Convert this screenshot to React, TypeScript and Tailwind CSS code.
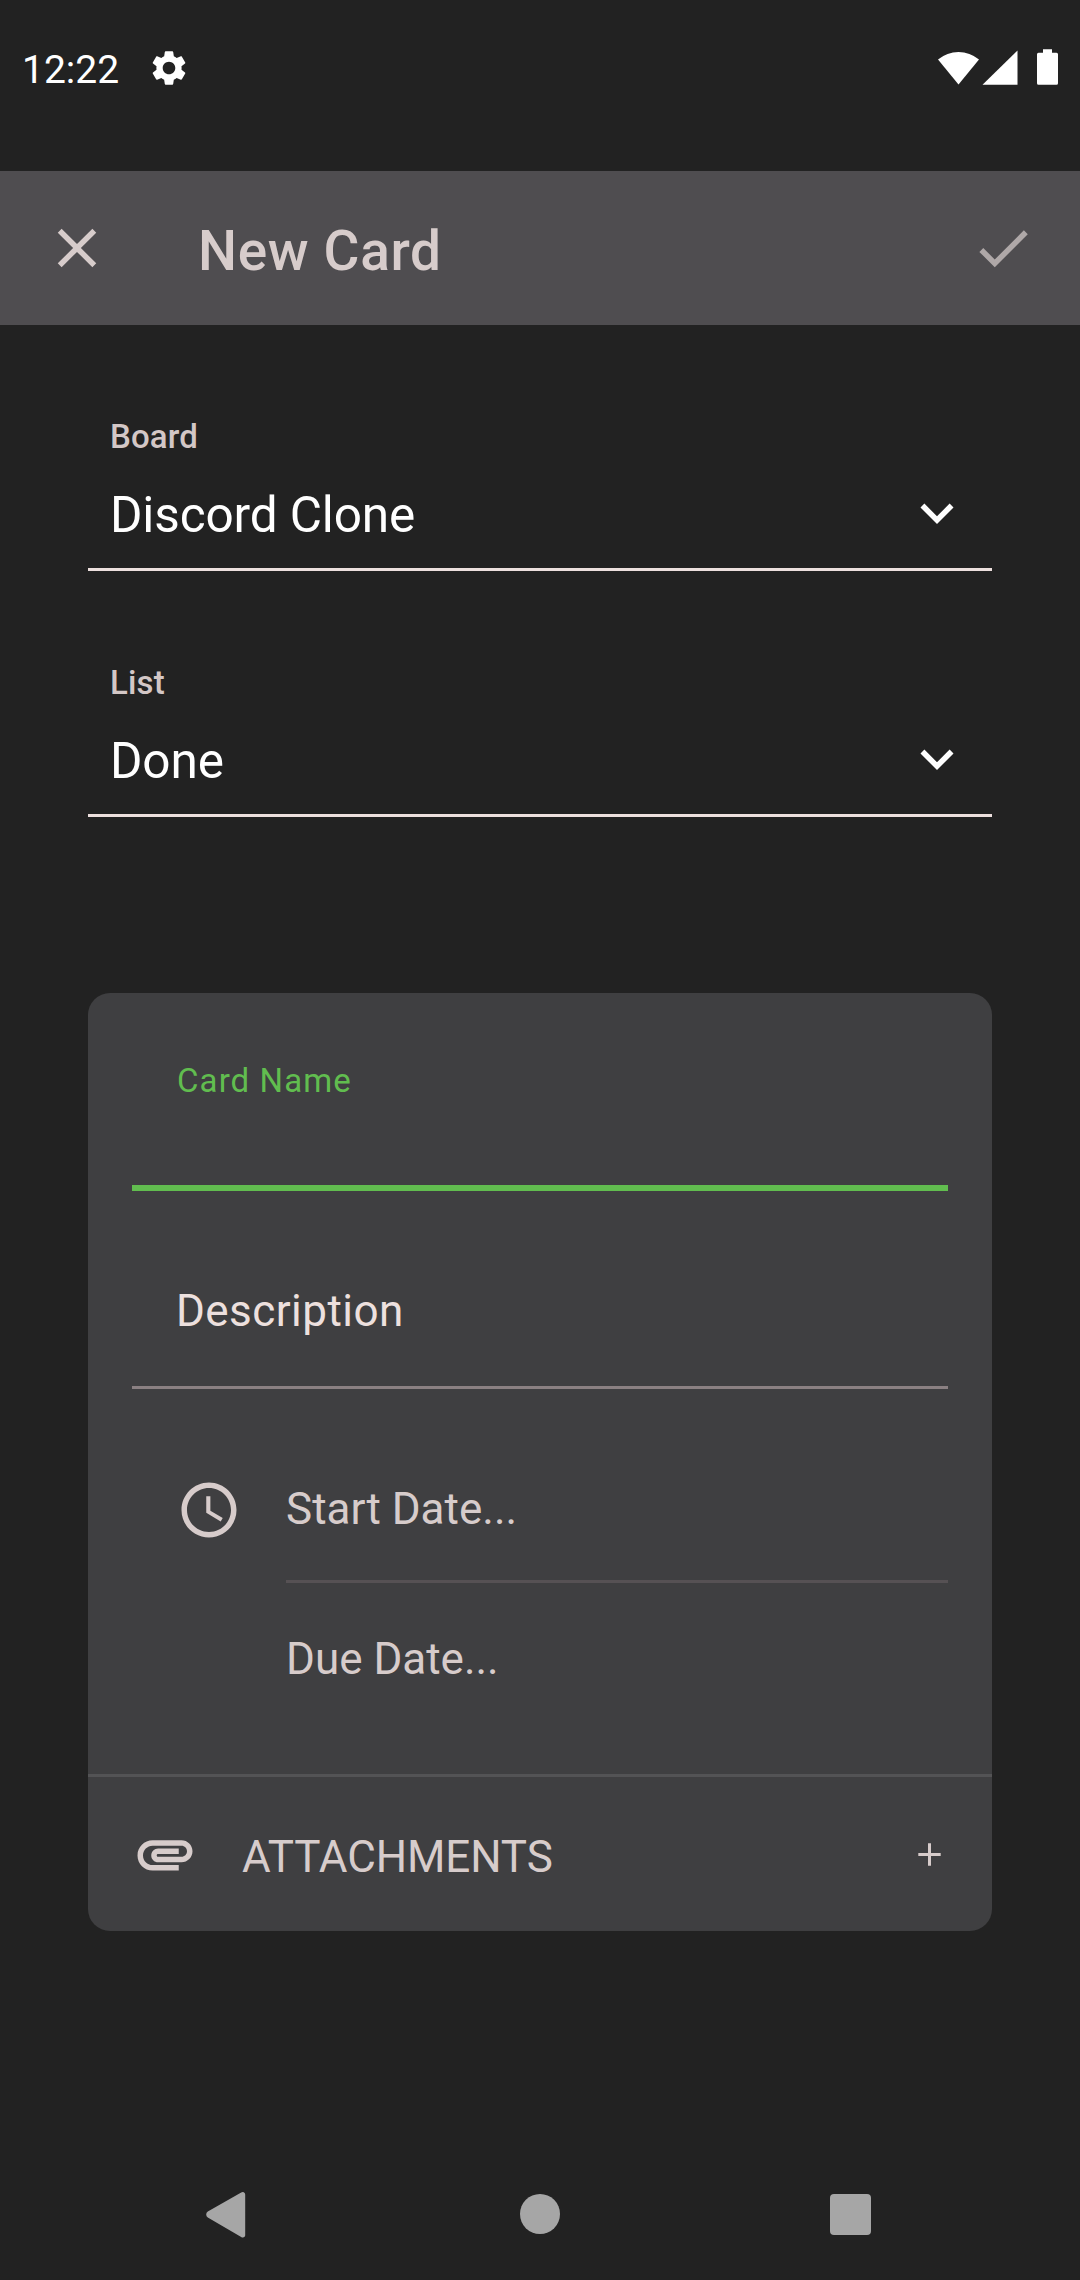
import type { ReactNode } from "react";

function Icon({ d, className }: { d: string; className: string }) {
  return (
    <svg viewBox="0 0 24 24" fill="currentColor" className={"block shrink-0 " + className}>
      <path d={d} />
    </svg>
  );
}

const CLOSE = "M19 6.41 17.59 5 12 10.59 6.41 5 5 6.41 10.59 12 5 17.59 6.41 19 12 13.41 17.59 19 19 17.59 13.41 12z";
const CHECK = "M9 16.17 4.83 12l-1.42 1.41L9 19 21 7l-1.41-1.41z";
const CHEVRON = "M7.41 8.59 12 13.17l4.59-4.58L18 10l-6 6-6-6z";
const CLOCK =
  "M11.99 2C6.47 2 2 6.48 2 12s4.47 10 9.99 10C17.52 22 22 17.52 22 12S17.52 2 11.99 2zM12 20c-4.42 0-8-3.58-8-8s3.58-8 8-8 8 3.58 8 8-3.58 8-8 8zM12.5 7H11v6l5.25 3.15.75-1.23-4.5-2.67z";
const CLIP =
  "M2 12.5C2 9.46 4.46 7 7.5 7H18c2.21 0 4 1.79 4 4s-1.79 4-4 4H9.5C8.12 15 7 13.88 7 12.5S8.12 10 9.5 10H17v2H9.41c-.55 0-.55 1 0 1H18c1.1 0 2-.9 2-2s-.9-2-2-2H7.5C5.57 9 4 10.57 4 12.5S5.57 16 7.5 16H17v2H7.5C4.46 18 2 15.54 2 12.5z";
const GEAR =
  "M19.14 12.94c.04-.3.06-.61.06-.94 0-.32-.02-.64-.07-.94l2.03-1.58c.18-.14.23-.41.12-.61l-1.92-3.32c-.12-.22-.37-.29-.59-.22l-2.39.96c-.5-.38-1.03-.7-1.62-.94l-.36-2.54c-.04-.24-.24-.41-.48-.41h-3.84c-.24 0-.43.17-.47.41l-.36 2.54c-.59.24-1.13.57-1.62.94l-2.39-.96c-.22-.08-.47 0-.59.22L2.74 8.87c-.12.21-.08.47.12.61l2.03 1.58c-.05.3-.09.63-.09.94s.02.64.07.94l-2.03 1.58c-.18.14-.23.41-.12.61l1.92 3.32c.12.22.37.29.59.22l2.39-.96c.5.38 1.03.7 1.62.94l.36 2.54c.05.24.24.41.48.41h3.84c.24 0 .44-.17.47-.41l.36-2.54c.59-.24 1.13-.56 1.62-.94l2.39.96c.22.08.47 0 .59-.22l1.92-3.32c.12-.22.07-.47-.12-.61l-2.01-1.58zM12 15.6c-1.98 0-3.6-1.62-3.6-3.6s1.62-3.6 3.6-3.6 3.6 1.62 3.6 3.6-1.62 3.6-3.6 3.6z";

function StatusBar() {
  return (
    <div className="flex h-[171px] items-start justify-between text-white">
      <div className="flex h-[138px] items-center pl-[22px]">
        <span className="w-[126px] pt-[3px] text-[39px]">12:22</span>
        <Icon d={GEAR} className="mb-[3px] size-[42px]" />
      </div>
      <svg viewBox="0 0 142 40" fill="currentColor" className="mt-[47px] block h-[40px] w-[142px]">
        <path d="M20.500 37.500L0 12.500a32 32 0 0 1 41 0z" />
        <path d="M79.500 3.500v34.200h-35z" />
        <path d="M105 2.300h9v3.500h4.500a1.500 1.500 0 0 1 1.500 1.500v29a1.500 1.500 0 0 1-1.500 1.500h-18a1.500 1.500 0 0 1-1.500-1.500v-29a1.500 1.500 0 0 1 1.500-1.500h4.500z" />
      </svg>
    </div>
  );
}

function Header() {
  return (
    <header className="flex h-[154px] items-center bg-[#4f4d50] px-[44px] text-[#d7cccb]">
      <Icon d={CLOSE} className="size-[66px]" />
      <h1 className="ml-[88px] flex-1 pt-[7px] text-[55px] font-medium tracking-[0.65px]">New Card</h1>
      <Icon d={CHECK} className="size-[66px] text-[#afa8a8]" />
    </header>
  );
}

function SelectField({ label, value }: { label: string; value: string }) {
  return (
    <div className="h-[178px] border-b-[3px] border-[#ede0de] px-[22px]">
      <div className="h-[87px] pt-[22px] text-[33px] leading-[44px] font-medium tracking-[0.15px] text-[#d3c7c6]">
        {label}
      </div>
      <div className="flex h-[66px] items-center justify-between text-white">
        <span className="pt-[6px] text-[49.5px] tracking-[-0.13px]">{value}</span>
        <Icon d={CHEVRON} className="size-[66px]" />
      </div>
    </div>
  );
}

function DateRow({ icon, line, children }: { icon?: ReactNode; line: string; children: ReactNode }) {
  return (
    <div className="flex h-[150px] pr-[44px] pl-[88px]">
      <div className="flex w-[110px] items-center pt-[3px]">{icon}</div>
      <div className={"flex flex-1 items-center text-[44px] text-[#d7cccb] " + line}>{children}</div>
    </div>
  );
}

function CardForm() {
  return (
    <section className="h-[938px] overflow-hidden rounded-[22px] bg-[#3f3f41]">
      <div className="mx-[44px] h-[198px] border-b-[6px] border-[#61bd4f] pt-[66px] pl-[45px]">
        <div className="text-[33px] leading-[44px] tracking-[1.1px] text-[#61bd4f]">Card Name</div>
      </div>
      <div className="mx-[44px] flex h-[198px] items-center border-b-[3px] border-[#8a8082] pt-[44px] pl-[44px]">
        <span className="text-[44px] tracking-[0.45px] text-[#ede0de]">Description</span>
      </div>
      <div className="h-[381px] pt-[44px]">
        <DateRow
          icon={<Icon d={CLOCK} className="size-[66px] text-[#d7cccb]" />}
          line="pt-[4px] border-b-[3px] border-[#565154]"
        >
          Start Date...
        </DateRow>
        <DateRow line="pt-[2px]">Due Date...</DateRow>
      </div>
      <div className="mt-[4px] flex h-[157px] items-center border-t-[3px] border-[#535355] pr-[43px] pl-[44px] text-[#d7cccb]">
        <Icon d={CLIP} className="size-[66px]" />
        <span className="ml-[44px] flex-1 pt-[6px] text-[44px] tracking-[-0.1px]">ATTACHMENTS</span>
        <svg viewBox="0 0 39 39" stroke="currentColor" strokeWidth="3" className="block size-[39px]">
          <path d="M8.300 19.500h22.400M19.500 8.300v22.400" />
        </svg>
      </div>
    </section>
  );
}

function NavBar() {
  return (
    <nav className="mt-auto flex h-[132px] items-center justify-between pr-[209px] pl-[204px] text-[#a6a6a6]">
      <svg viewBox="0 0 44 48" fill="currentColor" className="block h-[48px] w-[44px]">
        <path d="M3.800 21.500 37.200 2.500a2.500 2.500 0 0 1 4 2v41a2.500 2.500 0 0 1-4 1.500L3.800 27.500a3.600 3.600 0 0 1 0-6z" />
      </svg>
      <div className="ml-[2px] size-[40px] rounded-full bg-[#a6a6a6]" />
      <div className="size-[41px] rounded-[4px] bg-[#a6a6a6]" />
    </nav>
  );
}

export default function App() {
  return (
    <div className="flex h-[2280px] w-[1080px] flex-col bg-[#222222] font-['Roboto',sans-serif] leading-none">
      <StatusBar />
      <Header />
      <main className="px-[88px] pt-[68px]">
        <SelectField label="Board" value="Discord Clone" />
        <div className="h-[68px]" />
        <SelectField label="List" value="Done" />
        <div className="h-[176px]" />
        <CardForm />
      </main>
      <NavBar />
    </div>
  );
}
